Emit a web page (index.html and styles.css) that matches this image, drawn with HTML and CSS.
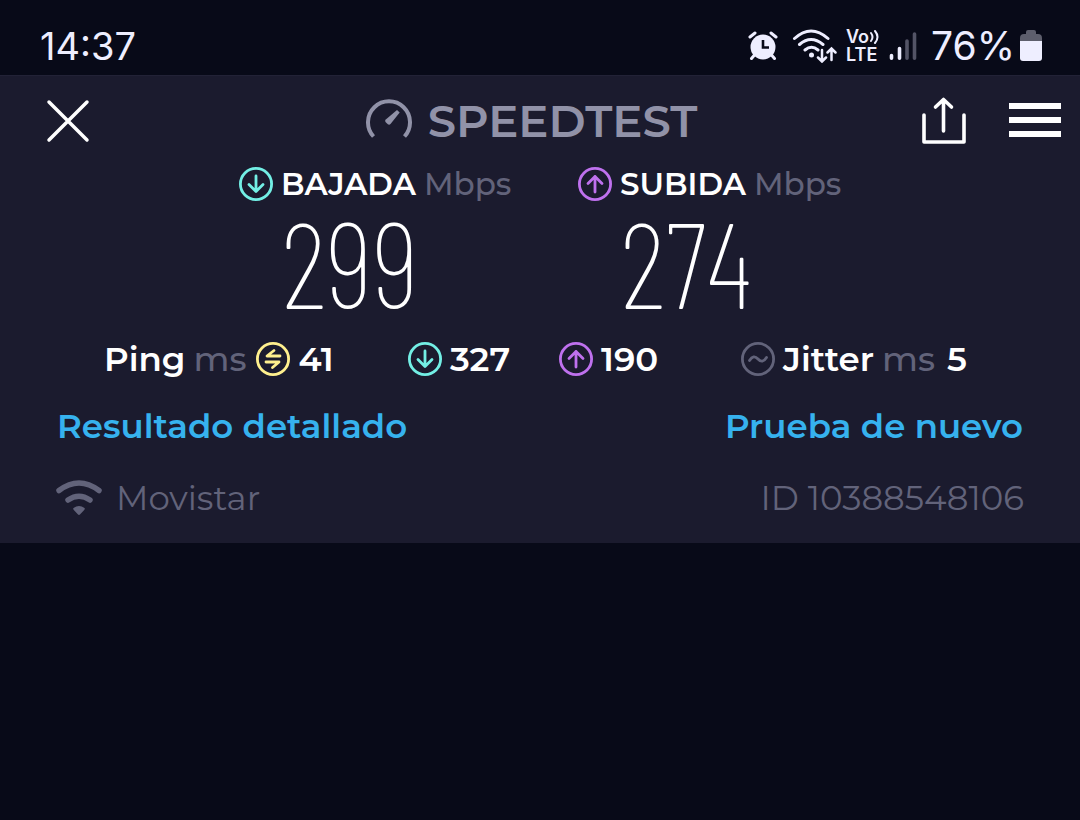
FILE: index.html
```html
<!DOCTYPE html>
<html lang="es">
<head>
<meta charset="utf-8">
<meta name="viewport" content="width=device-width, initial-scale=1">
<title>Speedtest</title>
<link rel="stylesheet" href="styles.css">
</head>
<body>
<svg class="sprite" aria-hidden="true">
  <symbol id="down" viewBox="0 0 34 34"><circle cx="17" cy="17" r="15.600"/><path d="M17 9v15.500M10 17.500l7 7 7-7"/></symbol>
  <symbol id="up" viewBox="0 0 34 34"><circle cx="17" cy="17" r="15.600"/><path d="M17 25V9.500M10 16.500l7-7 7 7"/></symbol>
</svg>
<div class="status">
  <time class="clock">14:37</time>
  <div class="tray">
    <svg class="alarm" width="30" height="30" viewBox="0 0 30 30" role="img" aria-label="Alarma">
      <path d="M2 6l5-4M28 6l-5-4M6.500 24l-3 3.500M23.500 24l3 3.500" stroke="#eef" stroke-width="3" stroke-linecap="round"/>
      <circle cx="15" cy="16" r="12.500" fill="#eef"/>
      <path d="M15 9v7.500h6" fill="none" stroke="#080a18" stroke-width="2.600"/>
    </svg>
    <svg class="net" width="46" height="34" viewBox="0 0 46 34" role="img" aria-label="Wi-Fi" fill="none" stroke="#eef" stroke-width="3" stroke-linecap="round">
      <path d="M2.500 9.500Q19-5.500 36 9.500M7.500 15.500q11.500-10 23.500 0M13 21q6.500-5.500 13 0"/>
      <circle cx="19.500" cy="26" r="2.500" fill="#eef" stroke="none"/>
      <path d="M30 21v11M26 28.500l4 4 4-4M39.500 31V20M35.500 23.500l4-4 4 4" stroke-width="2.500"/>
    </svg>
    <div class="volte"><span>Vo<svg width="10" height="16" viewBox="0 0 10 16" fill="none" stroke="#eef" stroke-width="2" stroke-linecap="round" aria-hidden="true"><path d="M2 4q3 4 0 8M6 2q5 6 0 12"/></svg></span><span>LTE</span></div>
    <svg class="bars" width="28" height="30" viewBox="0 0 28 30" role="img" aria-label="Cobertura" stroke-width="3.600" stroke-linecap="round">
      <path d="M2.500 24.500v2.700M10.500 17.500v9.700" stroke="#eef"/><path d="M18 10v17.200M25.500 3v24.200" stroke="#535466"/>
    </svg>
    <span class="level">76%</span>
    <svg class="battery" width="22" height="32" viewBox="0 0 22 32" role="img" aria-label="Batería">
      <path d="M6 4V2q0-2 2-2h6q2 0 2 2v2h2q4 0 4 4v4H0V8q0-4 4-4z" fill="#5d5e6c"/><path d="M0 11h22v17q0 3-3 3H3q-3 0-3-3z" fill="#eef"/>
    </svg>
  </div>
</div>
<main class="panel">
  <header class="bar">
    <button class="tool" aria-label="Cerrar"><svg width="44" height="44" viewBox="0 0 44 44" fill="none" stroke="#fff" stroke-width="3.500" stroke-linecap="round"><path d="M3 3l38 38M41 3L3 41"/></svg></button>
    <h1 class="brand"><svg width="46" height="46" viewBox="0 0 46 46" aria-hidden="true"><path d="M7.500 38.500a21 21 0 1 1 31 0" fill="none" stroke="#9192a8" stroke-width="4"/><path d="M31 12l2.700 2.500-9.200 11.500q-1.300 1.200-2.700.2l-2.300-2.200q-1-1.400.3-2.600z" fill="#9192a8"/></svg>SPEEDTEST</h1>
    <div class="actions">
      <button class="tool" aria-label="Compartir"><svg width="46" height="48" viewBox="0 0 46 48" fill="none" stroke="#fff" stroke-width="3.600" stroke-linecap="round" stroke-linejoin="round"><path d="M3 18v27h40V18M22.500 34V3M14.500 10l8-7.500 8 7.500"/></svg></button>
      <button class="tool" aria-label="Menú"><svg width="52" height="36" viewBox="0 0 52 36" fill="#fff"><path d="M0 0h52v6H0zM0 14h52v6H0zM0 28h52v6H0z"/></svg></button>
    </div>
  </header>
  <section class="speeds">
    <div><h2 class="label"><svg class="ring cyan" aria-hidden="true"><use href="#down"/></svg>BAJADA <span class="unit">Mbps</span></h2><p class="value">299</p></div>
    <div><h2 class="label"><svg class="ring violet" aria-hidden="true"><use href="#up"/></svg>SUBIDA <span class="unit">Mbps</span></h2><p class="value">274</p></div>
  </section>
  <section class="stats">
    <div class="stat"><span>Ping</span><span class="unit">ms</span><svg class="ring yellow" viewBox="0 0 34 34" aria-hidden="true"><circle cx="17" cy="17" r="15.600"/><path d="M24 14H11l7-5.500M10 20h13l-6.500 5.500"/></svg><span>41</span></div>
    <div class="stat"><svg class="ring cyan" aria-hidden="true"><use href="#down"/></svg><span>327</span></div>
    <div class="stat"><svg class="ring violet" aria-hidden="true"><use href="#up"/></svg><span>190</span></div>
    <div class="stat"><svg class="ring grey" viewBox="0 0 34 34" aria-hidden="true"><circle cx="17" cy="17" r="15.600"/><path d="M8.500 18.500q4-6.500 8.500-1.500t8.500-1.500"/></svg><span>Jitter</span><span class="unit">ms</span><span class="last">5</span></div>
  </section>
  <nav class="links"><a href="#detalle">Resultado detallado</a><a href="#prueba">Prueba de nuevo</a></nav>
  <footer class="foot">
    <span class="carrier"><svg width="46" height="36" viewBox="0 0 46 36" fill="none" stroke="#62637a" stroke-width="5.500" stroke-linecap="round" aria-hidden="true"><path d="M3 10.500q20-15 40 0M12 20q11-7.500 22 0"/><path d="M17.500 28q5.500-4 11 0 .8 1-.3 2l-4 4.300q-1.200 1.200-2.400 0l-4-4.300q-1.100-1-.3-2z" fill="#62637a" stroke="none"/></svg>Movistar</span>
    <span>ID 10388548106</span>
  </footer>
</main>
</body>
</html>
```
FILE: styles.css
```css
* { box-sizing: border-box; }
body { margin: 0; min-height: 100vh; background: #080a18; color: #fff; font-family: Montserrat, Inter, sans-serif; }
h1, h2, p { margin: 0; }
svg { flex: none; display: block; }
.sprite { position: absolute; width: 0; height: 0; }
.status { display: flex; justify-content: space-between; align-items: center; height: 75px; padding: 16px 38px 0 40px; color: #eef; font-family: Inter, sans-serif; font-size: 38px; }
.clock, .level { line-height: 60px; }
.level { font-size: 39px; }
.tray { display: flex; align-items: center; }
.net { margin-left: 14px; }
.volte { display: grid; margin-left: 8px; width: 32px; font: 600 18px/18px Inter, sans-serif; }
.volte span { display: flex; align-items: center; }
.bars { margin: 0 14px 0 11px; }
.battery { margin-left: 5px; }
.panel { background: #1b1b2e; border-top: 1px solid #222236; }
.bar { display: grid; grid-template-columns: 1fr auto 1fr; align-items: center; height: 90px; padding: 0 19px 0 46px; }
.tool { justify-self: start; padding: 0; border: 0; background: none; cursor: pointer; }
.brand { display: flex; align-items: center; gap: 16px; margin-right: 44px; color: #9192a8; font-size: 45px; font-weight: 600; line-height: 48px; }
.actions { display: flex; align-items: center; justify-content: flex-end; gap: 42px; }
.speeds { display: grid; grid-template-columns: 271px 263px; justify-content: center; gap: 68px; }
.label { display: flex; align-items: center; gap: 8px; height: 36px; font-size: 31px; font-weight: 600; line-height: 36px; white-space: nowrap; }
.unit { color: #62637a; font-weight: 500; }
.value { padding-left: 42px; font-family: "Barlow Condensed", "Roboto Condensed", Roboto, sans-serif; font-size: 120px; font-weight: 100; line-height: 118px; }
.ring { width: 34px; height: 34px; fill: none; stroke-width: 2.800px; stroke-linecap: round; stroke-linejoin: round; }
.cyan { stroke: #73efe5; }
.violet { stroke: #bf71ee; }
.yellow { margin-left: 2px; stroke: #fff08e; }
.grey { stroke: #62637a; }
.stats { display: grid; grid-template-columns: 304fr 151fr 182fr 235fr; padding: 17px 104px 0; }
.stat { display: flex; align-items: center; gap: 8px; font-size: 34px; font-weight: 600; line-height: 44px; white-space: nowrap; }
.last { margin-left: 4px; }
.links { display: flex; justify-content: space-between; padding: 23px 57px 0; font-size: 34px; font-weight: 600; line-height: 44px; }
.links a { color: #36b2ee; text-decoration: none; }
.foot { display: flex; justify-content: space-between; padding: 28px 56px 23px; color: #62637a; font-size: 34px; font-weight: 400; line-height: 44px; }
.carrier { display: flex; align-items: center; gap: 14px; }
```
